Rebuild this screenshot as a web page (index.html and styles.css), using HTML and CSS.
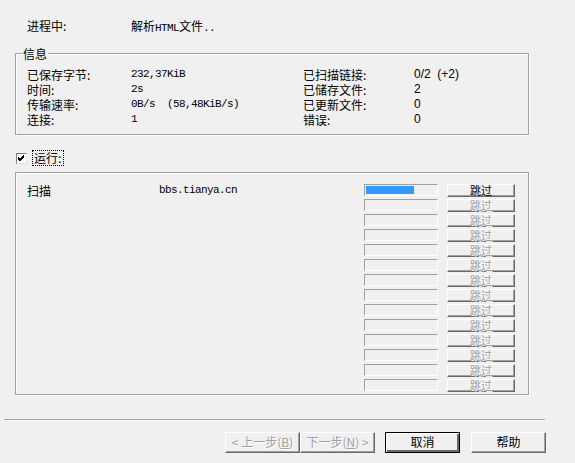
FILE: index.html
```html
<!DOCTYPE html>
<html lang="zh">
<head>
<meta charset="utf-8">
<title>HTTrack</title>
<link rel="stylesheet" href="styles.css">
</head>
<body>
<div class="dialog">
  <div class="status">
    <span class="status-label">进程中:</span>
    <span class="status-value">解析<span class="mono">HTML</span>文件<span class="mono">..</span></span>
  </div>

  <div class="groupbox info">
    <div class="legend">信息</div>
    <div class="info-grid">
      <span>已保存字节:</span><span class="mono">232,37KiB</span><span>已扫描链接:</span><span class="sans">0/2&nbsp; (+2)</span>
      <span>时间:</span><span class="mono">2s</span><span>已储存文件:</span><span class="sans">2</span>
      <span>传输速率:</span><span class="mono">0B/s&nbsp; (58,48KiB/s)</span><span>已更新文件:</span><span class="sans">0</span>
      <span>连接:</span><span class="mono">1</span><span>错误:</span><span class="sans">0</span>
    </div>
  </div>

  <div class="check-row">
    <span class="checkbox"><svg width="9" height="9" viewBox="0 0 9 9"><path d="M1 4 L3 6 L7 2 M1 5 L3 7 L7 3 M1 3 L3 5 L7 1" stroke="#000" stroke-width="1" fill="none"/></svg></span>
    <span class="check-label">运行:</span>
  </div>

  <div class="groupbox tasks">
    <div class="task-row">
      <span class="task-name">扫描</span>
      <span class="task-url mono">bbs.tianya.cn</span>
      <span class="bar"><span class="bar-fill" style="width:48px"></span></span>
      <span class="skip">跳过</span>
    </div>
    <div class="task-row"><span></span><span></span><span class="bar"></span><span class="skip disabled">跳过</span></div>
    <div class="task-row"><span></span><span></span><span class="bar"></span><span class="skip disabled">跳过</span></div>
    <div class="task-row"><span></span><span></span><span class="bar"></span><span class="skip disabled">跳过</span></div>
    <div class="task-row"><span></span><span></span><span class="bar"></span><span class="skip disabled">跳过</span></div>
    <div class="task-row"><span></span><span></span><span class="bar"></span><span class="skip disabled">跳过</span></div>
    <div class="task-row"><span></span><span></span><span class="bar"></span><span class="skip disabled">跳过</span></div>
    <div class="task-row"><span></span><span></span><span class="bar"></span><span class="skip disabled">跳过</span></div>
    <div class="task-row"><span></span><span></span><span class="bar"></span><span class="skip disabled">跳过</span></div>
    <div class="task-row"><span></span><span></span><span class="bar"></span><span class="skip disabled">跳过</span></div>
    <div class="task-row"><span></span><span></span><span class="bar"></span><span class="skip disabled">跳过</span></div>
    <div class="task-row"><span></span><span></span><span class="bar"></span><span class="skip disabled">跳过</span></div>
    <div class="task-row"><span></span><span></span><span class="bar"></span><span class="skip disabled">跳过</span></div>
    <div class="task-row"><span></span><span></span><span class="bar"></span><span class="skip disabled">跳过</span></div>
  </div>

  <div class="separator"></div>

  <div class="buttons">
    <span class="btn disabled">&lt; 上一步(<u>B</u>)</span>
    <span class="btn disabled">下一步(<u>N</u>) &gt;</span>
    <span class="btn default">取消</span>
    <span class="btn">帮助</span>
  </div>
</div>
</body>
</html>
```

FILE: styles.css
```css
* { box-sizing: border-box; }

html, body {
  margin: 0;
  padding: 0;
  background: #f0f0f0;
}

body {
  width: 575px;
  height: 463px;
  overflow: hidden;
  font-family: "Noto Sans CJK SC", "Liberation Sans", sans-serif;
  font-size: 12px;
  line-height: 15px;
  color: #000;
}

.mono {
  font-family: "Liberation Mono", "Noto Sans CJK SC", monospace;
  font-size: 11px;
  letter-spacing: -0.6px;
}

.sans {
  font-family: "Liberation Sans", sans-serif;
  font-size: 12px;
}

.dialog {
  padding-top: 18px;
}

.status {
  display: flex;
  height: 15px;
  padding-left: 27px;
}

.status-label {
  width: 104px;
}

.groupbox {
  margin-left: 15px;
  width: 514px;
  border: 1px solid #a0a0a0;
  box-shadow: inset 1px 1px 0 #fff, 1px 1px 0 #fff;
}

.info {
  margin-top: 20px;
  height: 82px;
}

.legend {
  width: fit-content;
  margin: -8px 0 0 6px;
  padding: 0 1px;
  background: #f0f0f0;
  height: 15px;
}

.info-grid {
  display: grid;
  grid-template-columns: 104px 172px 111px 1fr;
  grid-auto-rows: 15px;
  margin-top: 6px;
  padding-left: 11px;
  white-space: nowrap;
  font-size: 12px;
  line-height: 15px;
}

.check-row {
  display: flex;
  align-items: center;
  height: 16px;
  margin-top: 15px;
  padding-left: 16px;
}

.checkbox {
  display: flex;
  align-items: center;
  justify-content: center;
  width: 11px;
  height: 11px;
  background: #fff;
  border-top: 1px solid #808080;
  border-left: 1px solid #808080;
  border-right: 1px solid #e3e3e3;
  border-bottom: 1px solid #e3e3e3;
}

.check-label {
  margin-left: 5px;
  width: 32px;
  height: 16px;
  padding-left: 1px;
  border: 1px dotted #000;
  line-height: 14px;
}

.tasks {
  margin-top: 6px;
  height: 223px;
  padding-top: 11px;
}

.task-row {
  display: grid;
  grid-template-columns: 132px 205px 74px 77px;
  height: 15px;
  padding-left: 11px;
  align-items: start;
}

.task-name,
.task-url {
  margin-top: -1px;
}

.bar {
  width: 74px;
  height: 12px;
  padding: 1px;
  border-top: 1px solid #a0a0a0;
  border-left: 1px solid #a0a0a0;
  border-right: 1px solid #fff;
  border-bottom: 1px solid #fff;
}

.bar-fill {
  display: block;
  height: 8px;
  background: #3399ff;
}

.skip {
  margin-left: 9px;
  width: 68px;
  height: 13px;
  border-top: 1px solid #fff;
  border-left: 1px solid #fff;
  border-right: 1px solid #696969;
  border-bottom: 1px solid #696969;
  box-shadow: inset -1px -1px 0 #a0a0a0;
  font-size: 11px;
  line-height: 11px;
  text-align: center;
}

.skip.disabled {
  color: #a0a0a0;
  text-shadow: 1px 1px 0 #fff;
}

.separator {
  margin: 24px 0 0 4px;
  width: 541px;
  border-top: 1px solid #a0a0a0;
  border-bottom: 1px solid #fff;
}

.buttons {
  display: flex;
  margin-top: 11px;
  padding-left: 225px;
}

.btn {
  width: 75px;
  height: 21px;
  text-align: center;
  line-height: 18px;
  border-top: 1px solid #fff;
  border-left: 1px solid #fff;
  border-right: 1px solid #696969;
  border-bottom: 1px solid #696969;
  box-shadow: inset -1px -1px 0 #a0a0a0;
}

.btn u {
  text-decoration: underline;
}

.btn.disabled {
  color: #a0a0a0;
  text-shadow: 1px 1px 0 #fff;
}

.btn.default {
  margin-left: 10px;
  border: 1px solid #000;
  box-shadow: inset 1px 1px 0 #fff, inset -2px -2px 0 #696969;
}

.btn.default + .btn {
  margin-left: 11px;
}
```
